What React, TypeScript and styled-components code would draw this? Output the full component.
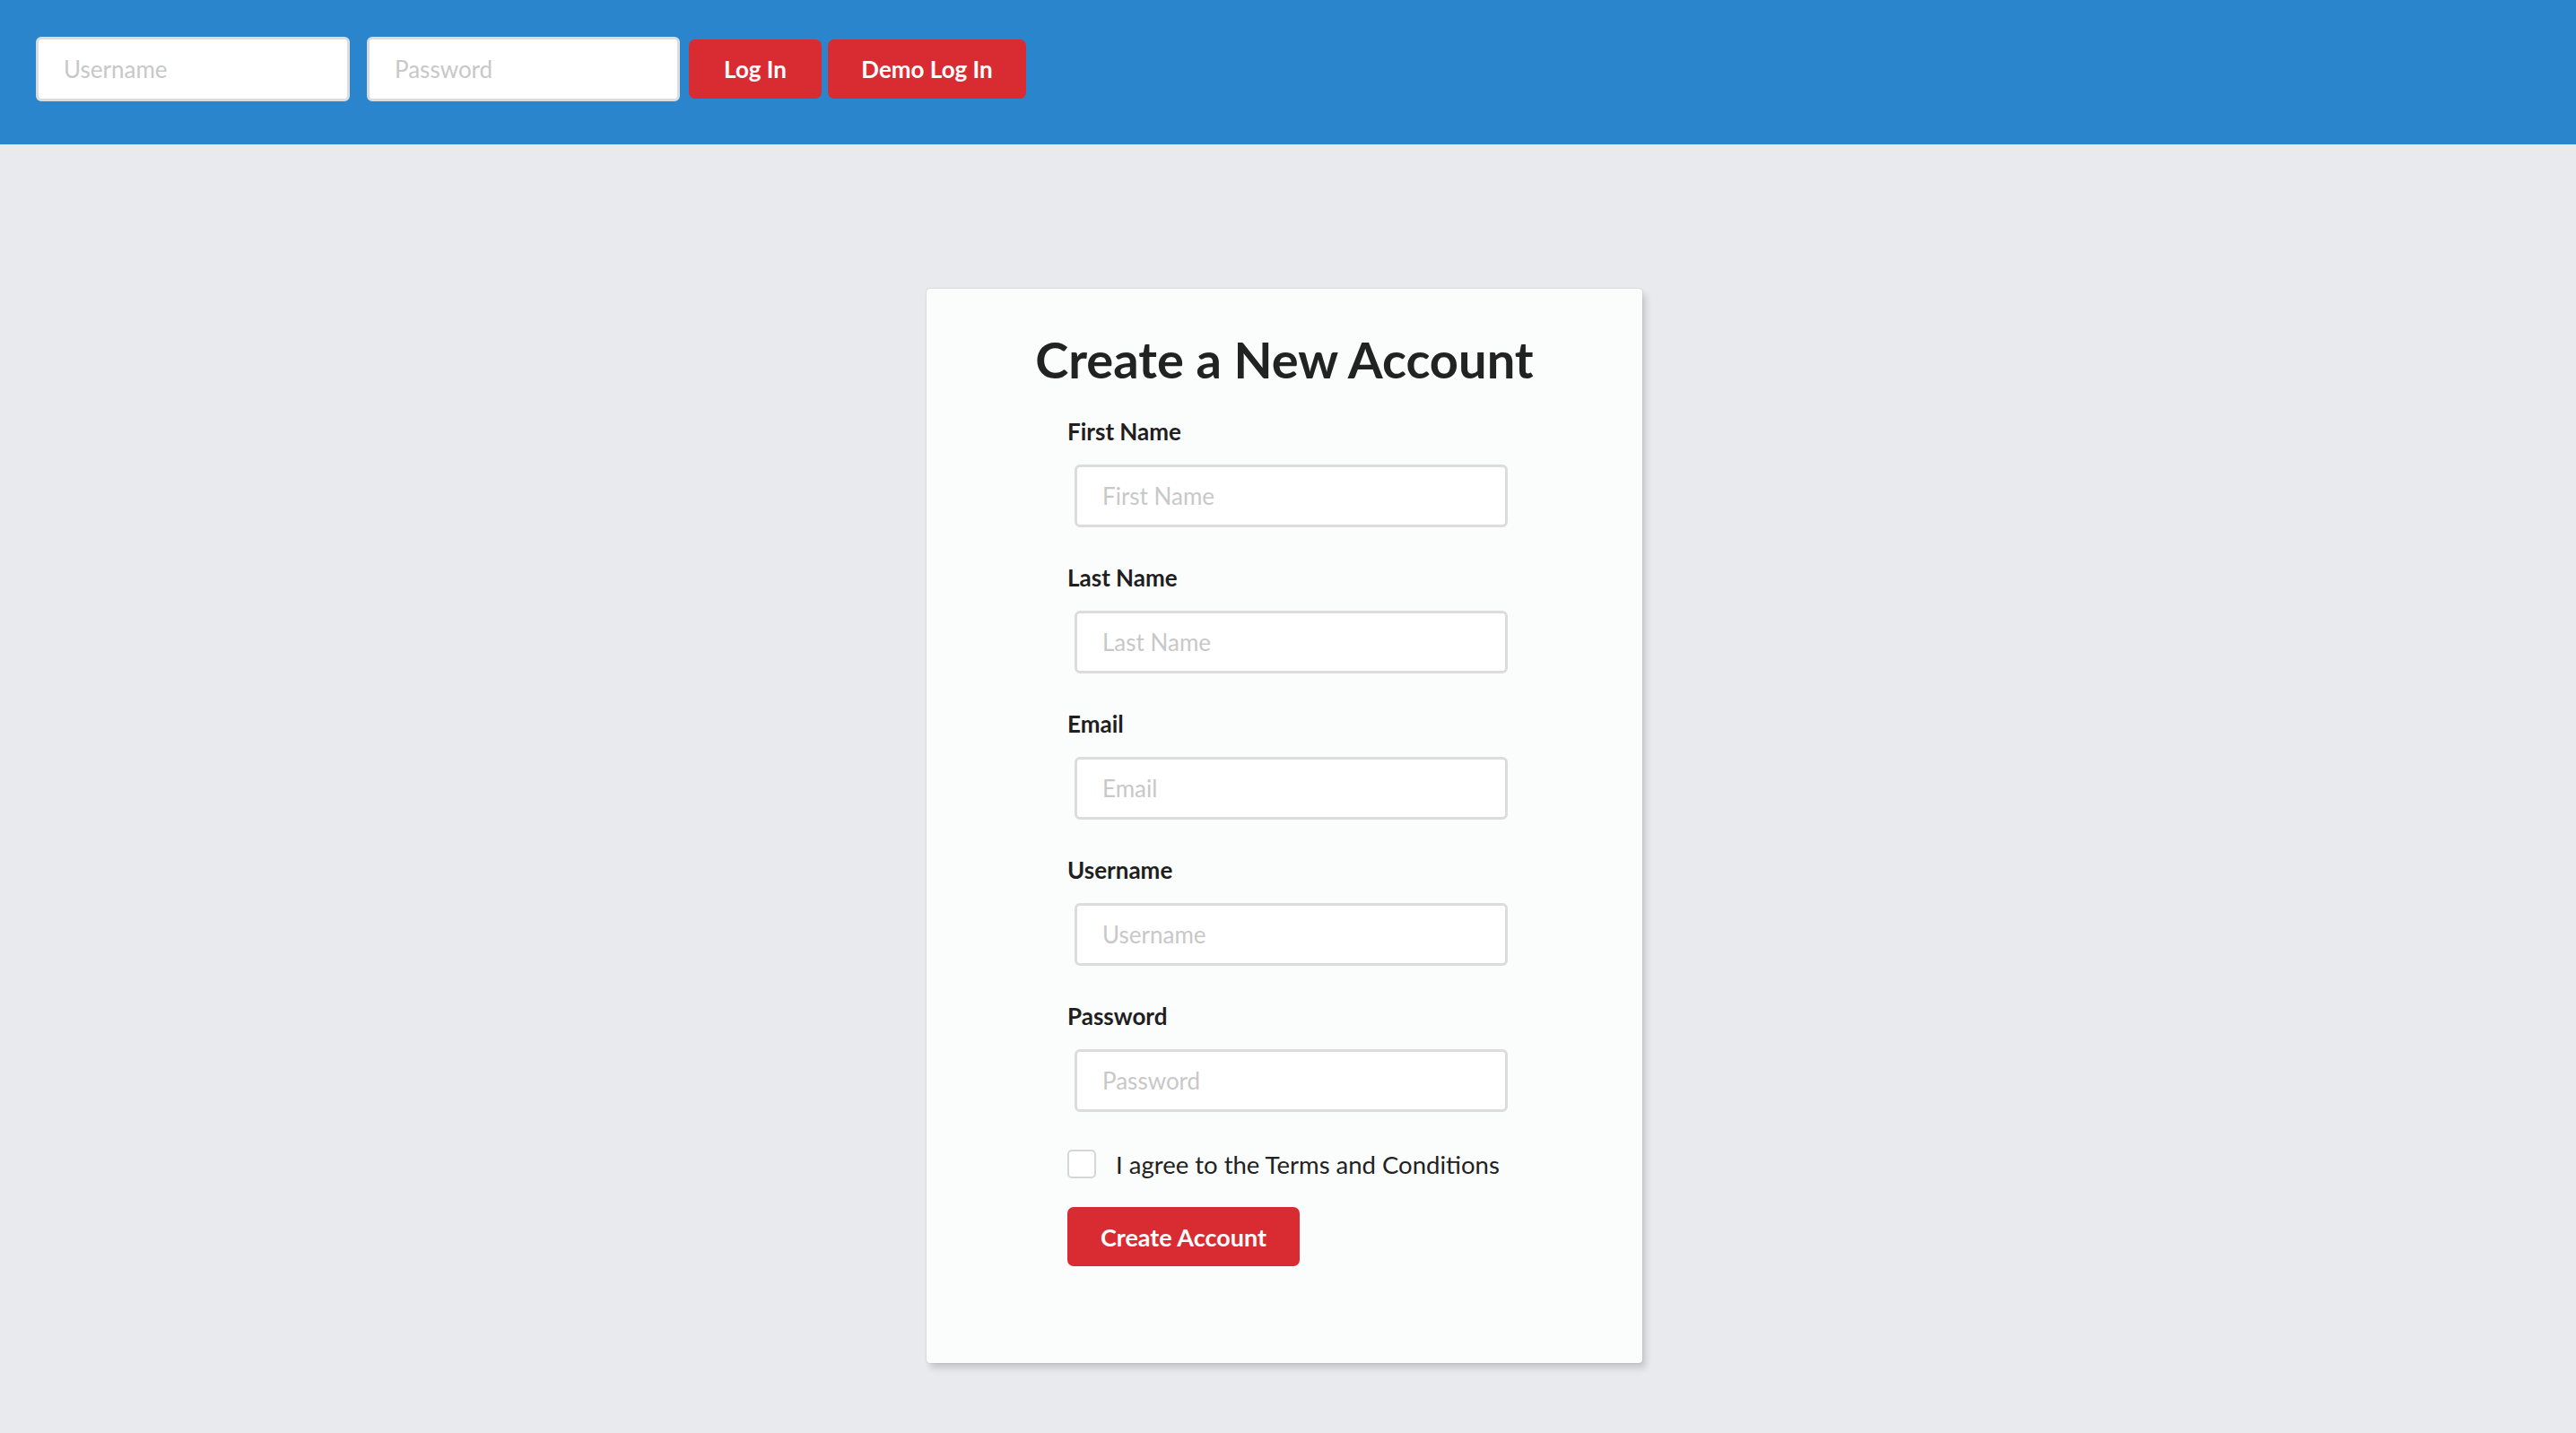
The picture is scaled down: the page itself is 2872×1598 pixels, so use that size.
import React from "react";
import styled, { createGlobalStyle } from "styled-components";

const GlobalStyle = createGlobalStyle`
  html, body {
    margin: 0;
    padding: 0;
    background: #e9eaee;
    font-family: Lato, "Open Sans", "Liberation Sans", sans-serif;
  }
  * { box-sizing: border-box; }
`;

const Page = styled.div`
  min-height: 1598px;
  background: #e9eaee;
  display: flex;
  flex-direction: column;
`;

const Header = styled.header`
  height: 161px;
  background: #2a85cd;
  padding: 40px 0 0 40px;
`;

const HeaderRow = styled.form`
  display: flex;
  align-items: center;
  height: 73px;
`;

const TextInput = styled.input<{ $width: number; $compact?: boolean }>`
  width: ${(p) => p.$width}px;
  height: ${(p) => (p.$compact ? 70 : 72)}px;
  border: 3px solid #dcdcdc;
  border-radius: 6px;
  background: #fff;
  padding: 0 0 0 28px;
  font-family: Lato, "Open Sans", "Liberation Sans", sans-serif;
  font-size: 26px;
  color: #333;
  outline: none;
  &::placeholder {
    color: #c8c8c8;
  }
`;

const HeaderInput = styled(TextInput)<{ $gap?: number }>`
  margin-right: ${(p) => p.$gap ?? 0}px;
`;

const RedButton = styled.button<{ $width: number; $size?: number }>`
  width: ${(p) => p.$width}px;
  height: 66px;
  background: #d92b32;
  color: #fff;
  border: none;
  border-radius: 7px;
  font-family: Lato, "Open Sans", "Liberation Sans", sans-serif;
  font-weight: 700;
  font-size: ${(p) => p.$size ?? 26}px;
  padding: 0;
  cursor: pointer;
`;

const HeaderButton = styled(RedButton)`
  margin-right: 7px;
`;

const Main = styled.main`
  display: flex;
  justify-content: center;
  padding: 161px 8px 0 0;
`;

const Card = styled.section`
  width: 798px;
  height: 1198px;
  background: #fbfcfc;
  border-radius: 4px;
  box-shadow: 0 0 2px rgba(0, 0, 0, 0.18), 4px 6px 7px rgba(0, 0, 0, 0.14);
  padding: 45px 0 0 157px;
  display: flex;
  flex-direction: column;
`;

const Title = styled.h1`
  margin: 0 0 33px -157px;
  text-align: center;
  font-size: 56px;
  line-height: 67px;
  font-weight: 700;
  color: #222;
`;

const Field = styled.div`
  display: flex;
  flex-direction: column;
  align-items: flex-start;
  margin-bottom: 42px;
`;

const Label = styled.label`
  font-size: 26px;
  line-height: 29px;
  font-weight: 700;
  color: #1f1f1f;
  margin-bottom: 22px;
`;

const FormInput = styled(TextInput)`
  margin-left: 8px;
`;

const CheckRow = styled.label`
  display: flex;
  align-items: center;
  gap: 22px;
  height: 32px;
  font-size: 27.5px;
  color: #222;
  margin-bottom: 32px;
`;

const Checkbox = styled.input`
  appearance: none;
  width: 32px;
  height: 32px;
  margin: 0;
  border: 2px solid #d6d6d6;
  border-radius: 5px;
  background: #fff;
`;

const fields = [
  { label: "First Name", type: "text" },
  { label: "Last Name", type: "text" },
  { label: "Email", type: "email" },
  { label: "Username", type: "text" },
  { label: "Password", type: "password" },
];

export default function App() {
  return (
    <Page>
      <GlobalStyle />
      <Header>
        <HeaderRow onSubmit={(e) => e.preventDefault()}>
          <HeaderInput $width={350} $gap={19} placeholder="Username" />
          <HeaderInput $width={349} $gap={10} type="password" placeholder="Password" />
          <HeaderButton $width={148}>Log In</HeaderButton>
          <HeaderButton $width={221}>Demo Log In</HeaderButton>
        </HeaderRow>
      </Header>
      <Main>
        <Card>
          <Title>Create a New Account</Title>
          {fields.map((f) => (
            <Field key={f.label}>
              <Label>{f.label}</Label>
              <FormInput $width={483} $compact type={f.type} placeholder={f.label} />
            </Field>
          ))}
          <CheckRow>
            <Checkbox type="checkbox" />
            I agree to the Terms and Conditions
          </CheckRow>
          <RedButton $width={259} $size={27}>Create Account</RedButton>
        </Card>
      </Main>
    </Page>
  );
}
